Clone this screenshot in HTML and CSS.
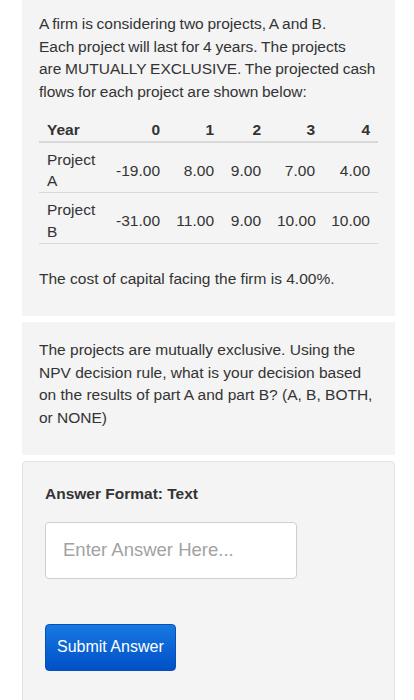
FILE: index.html
```html
<!DOCTYPE html>
<html>
<head>
	<meta charset="utf-8">
	<meta name="viewport" content="width=device-width, initial-scale=1">
	<title>Question</title>
	<link rel="stylesheet" href="styles.css">
</head>
<body>
	<div class="question">
		<div class="panel panel-first">
			<p class="intro">A firm is considering two projects, A and B.<br>Each project will last for 4 years. The projects<br>are MUTUALLY EXCLUSIVE. The projected cash flows for each project are shown below:</p>
			<table class="cash-table">
				<thead>
					<tr>
						<th class="col-name">Year</th>
						<th class="col-0">0</th>
						<th class="col-1">1</th>
						<th class="col-2">2</th>
						<th class="col-3">3</th>
						<th class="col-4">4</th>
					</tr>
				</thead>
				<tbody>
					<tr>
						<td>Project A</td>
						<td>-19.00</td>
						<td>8.00</td>
						<td>9.00</td>
						<td>7.00</td>
						<td>4.00</td>
					</tr>
					<tr>
						<td>Project B</td>
						<td>-31.00</td>
						<td>11.00</td>
						<td>9.00</td>
						<td>10.00</td>
						<td>10.00</td>
					</tr>
				</tbody>
			</table>
			<p>The cost of capital facing the firm is 4.00%.</p>
		</div>

		<div class="panel">
			<p>The projects are mutually exclusive. Using the NPV decision rule, what is your decision based on the results of part A and part B? (A, B, BOTH, or NONE)</p>
		</div>

		<div class="answer-box">
			<div class="answer-format">Answer Format: Text</div>
			<input class="answer-input" type="text" placeholder="Enter Answer Here...">
			<button class="submit-btn" type="button">Submit Answer</button>
		</div>
	</div>
</body>
</html>
```

FILE: styles.css
```css
body {
	margin: 0;
	background: #fff;
	font-family: "Liberation Sans", Arial, Helvetica, sans-serif;
	font-size: 15.5px;
	color: #333;
}

.question {
	width: 373px;
	margin: 0 0 0 22px;
	display: flex;
	flex-direction: column;
	gap: 6px;
}

.panel {
	background: #f4f4f4;
	padding: 17px 17px 16px;
}
.panel-first {
	padding-top: 13px;
}

.panel p {
	margin: 0 0 10px;
	line-height: 22.5px;
}
.panel .intro {
	word-spacing: -0.6px;
}

.cash-table {
	width: 100%;
	table-layout: fixed;
	border-collapse: collapse;
	margin: 0 0 24px;
	line-height: 21.7px;
}
.cash-table th,
.cash-table td {
	padding: 6px 8px 0;
	text-align: right;
	white-space: nowrap;
	vertical-align: middle;
}
.cash-table th {
	font-weight: bold;
	border-bottom: 2px solid #d9d9d9;
}
.cash-table td {
	border-bottom: 1px solid #d9d9d9;
}
.cash-table th:first-child,
.cash-table td:first-child {
	text-align: left;
	white-space: normal;
}
/* widths are content widths, the 8px side padding comes on top */
.col-name { width: 50px; }
.col-0 { width: 47px; }
.col-1 { width: 38px; }
.col-2 { width: 31px; }
.col-3 { width: 38px; }
.col-4 { width: 39px; }

.answer-box {
	background: #f4f4f4;
	border: 1px solid #e2e2e2;
	border-radius: 4px;
	padding: 21px 22px 40px;
	display: flex;
	flex-direction: column;
	align-items: flex-start;
}

.answer-format {
	font-weight: bold;
	line-height: 22.5px;
}

.answer-input {
	box-sizing: border-box;
	width: 252px;
	height: 57px;
	margin-top: 16px;
	padding: 0 17px;
	border: 1px solid #cfcfcf;
	border-radius: 4px;
	background: #fff;
	font-family: "Liberation Sans", Arial, sans-serif;
	font-size: 18.5px;
	color: #333;
	outline: none;
}
.answer-input::placeholder {
	color: #a2a2a2;
}

.submit-btn {
	box-sizing: border-box;
	margin-top: 45px;
	height: 47px;
	padding: 0 11px;
	border: 1px solid #0a4fb8;
	border-radius: 4px;
	background: linear-gradient(to bottom, #1779e2, #0050c6);
	color: #fff;
	font-family: "Liberation Sans", Arial, sans-serif;
	font-size: 16px;
	white-space: nowrap;
	cursor: pointer;
}
```
